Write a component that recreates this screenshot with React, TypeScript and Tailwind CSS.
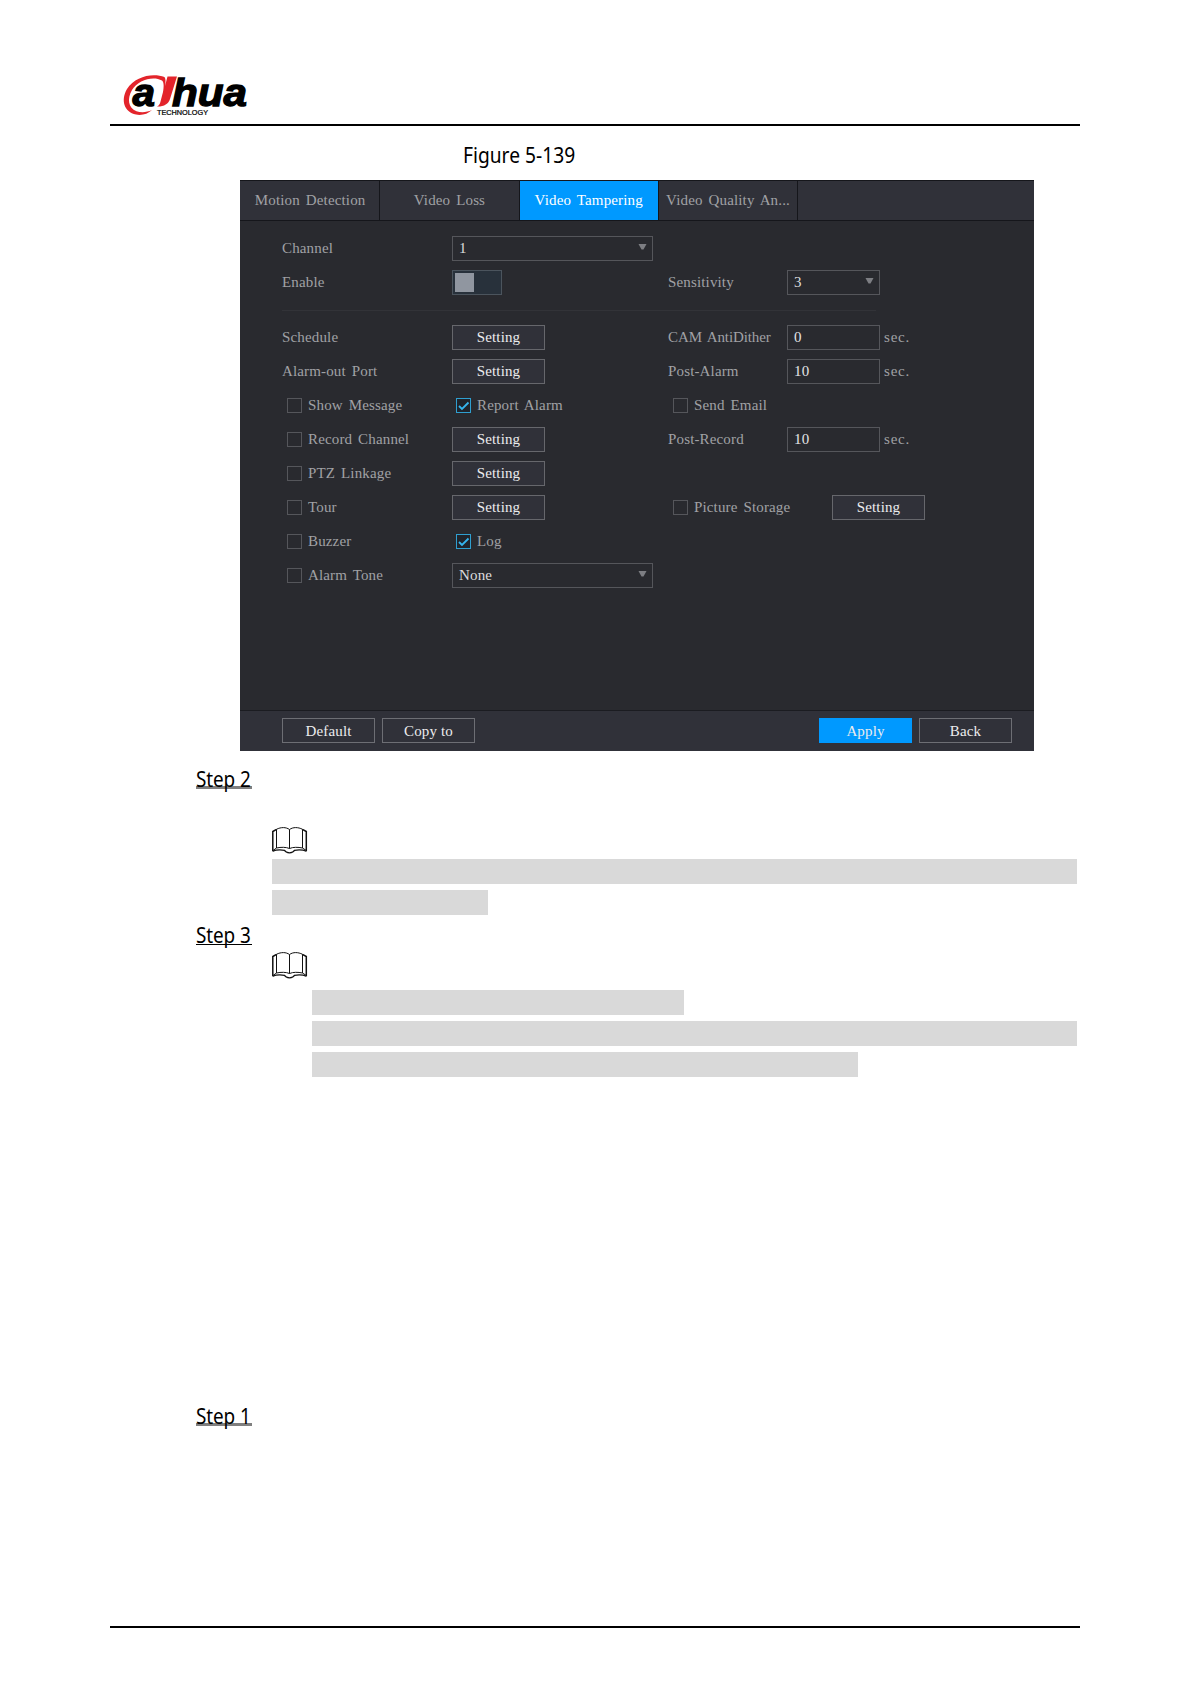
import type { ReactNode } from "react"
import { clsx } from "clsx"

const tabs = [
  { label: "Motion Detection", active: false },
  { label: "Video Loss", active: false },
  { label: "Video Tampering", active: true },
  { label: "Video Quality An...", active: false },
]

function Logo() {
  return (
    <svg width="130" height="46" viewBox="0 0 130 46" overflow="visible" className="block">
      <path
        d="M42.500 4C31 -0.500 13 3 5 16C-1.500 27 2 39 14 41.600C20 42.600 26 41 30 37C25 39.400 19 39.800 14.500 38.200C6 35 5 25.500 10 17C16 7 31 2.500 40 7.500C42 9 42 14 41 19L38.500 28.500C38 31 37 32.500 35 33.600C42 33.800 46.500 31 48 26L55 3.500H45.500L43 13C43.500 9 44 6 42.500 4Z"
        fill="#e3242b"
      />
      <text x="10.500" y="32.500" textLength="22.500" lengthAdjust="spacingAndGlyphs" className="font-['Liberation_Sans'] text-[38px] font-bold italic" stroke="#000" strokeWidth="1.300">a</text>
      <text x="50" y="32.500" textLength="75" lengthAdjust="spacingAndGlyphs" className="font-['Liberation_Sans'] text-[38px] font-bold italic" stroke="#000" strokeWidth="1.300">hua</text>
      <text x="35" y="42" textLength="51" lengthAdjust="spacingAndGlyphs" className="font-['Liberation_Sans'] text-[6.5px]" stroke="#000" strokeWidth="0.2">TECHNOLOGY</text>
    </svg>
  )
}

function BookIcon() {
  return (
    <svg width="36" height="27" viewBox="0 0 36 27" fill="none" stroke="#111" strokeWidth="1" className="block">
      <path d="M4.500 2.300C9 0 14 0 17.500 2.500C21 0 26 0 30.500 2.300V21C26 20 21 20 17.500 21.500C14 20 9 20 4.500 21Z" />
      <path d="M17.500 2.500V21.500" />
      <path d="M4.500 2.300L0.800 4.500V24.300M30.500 2.300L34.300 4.500V24.300" strokeWidth="1.500" />
      <path d="M0.800 24.300C5 22.300 9 22.800 12.500 23.300C14 26.600 21 26.600 22.500 23.300C26 22.800 30 22.300 34.300 24.300" strokeWidth="1.200" />
      <path d="M1 23.500L4.500 21M34.300 23.500L30.500 21" />
    </svg>
  )
}

function Button({ children, variant = "filled" }: { children: ReactNode; variant?: "filled" | "outline" | "primary" }) {
  return (
    <button
      className={clsx(
        "block h-[25px] w-[93px] shrink-0 border text-center leading-[22px] text-[#ececee]",
        variant === "filled" && "border-[#66676c] bg-[#303139]",
        variant === "outline" && "border-[#6d6e74]",
        variant === "primary" && "border-[#0099ff] bg-[#0099ff]"
      )}
    >
      {children}
    </button>
  )
}

function Select({ value, className }: { value: string; className: string }) {
  return (
    <div className={clsx("flex h-[25px] items-center justify-between border border-[#55565b] pr-[5px] pl-1.5 text-[#dcdcde]", className)}>
      <span>{value}</span>
      <svg width="9" height="6" viewBox="0 0 9 6" className="mb-0.5">
        <path d="M0.500 0H8.500L5.500 5.500H3.500Z" fill="#7d7e83" />
      </svg>
    </div>
  )
}

function NumberField({ value }: { value: string }) {
  return (
    <>
      <div className="h-[25px] w-[93px] border border-[#55565b] pl-1.5 leading-[22px] text-[#e4e4e6]">{value}</div>
      <span className="ml-1 tracking-[0.8px]">sec.</span>
    </>
  )
}

function Checkbox({ label, checked = false }: { label: string; checked?: boolean }) {
  return (
    <label className={clsx("flex items-center gap-1.5", checked ? "pl-1" : "pl-[5px]")}>
      <span className={clsx("block size-[15px] shrink-0 border", checked ? "border-[#2f9fd0] bg-[#20242b]" : "border-[#55565b]")}>
        {checked && (
          <svg width="13" height="13" viewBox="0 0 13 13" fill="none" stroke="#35b5ee" strokeWidth="1.800">
            <path d="M2 7L5 10L11.500 3.500" />
          </svg>
        )}
      </span>
      <span>{label}</span>
    </label>
  )
}

function Row({ left, middle, right, field }: { left: ReactNode; middle?: ReactNode; right?: ReactNode; field?: ReactNode }) {
  return (
    <div className="grid h-[34px] grid-cols-[170px_216px_119px_1fr] items-center whitespace-nowrap">
      <div>{left}</div>
      <div>{middle}</div>
      <div>{right}</div>
      <div className="flex items-center">{field}</div>
    </div>
  )
}

function Step({ number, underline }: { number: number; underline: string }) {
  return (
    <div className={clsx("ml-[196px] w-14 whitespace-nowrap", underline)}>
      <span className="block w-[62px] origin-left scale-x-[0.9] font-['Noto_Sans'] text-[21px] leading-[22px] tracking-[-0.1px] text-black">
        Step {number}
      </span>
    </div>
  )
}

function SettingsPanel() {
  return (
    <div className="ml-[240px] flex h-[571px] w-[794px] flex-col bg-[#292a2f] font-['Liberation_Serif'] text-[15px] leading-5 tracking-[0.15px] text-[#a0a1a5] [word-spacing:2px]">
      <div className="flex h-[41px] border-y border-[#15161b] bg-[#303139] pl-px">
        {tabs.map((tab) => (
          <div
            key={tab.label}
            className={clsx(
              "w-[139.3px] border-r border-[#15161b] text-center leading-[39px] whitespace-nowrap",
              tab.active && "bg-[#0099ff] text-white"
            )}
          >
            {tab.label}
          </div>
        ))}
      </div>

      <div className="flex-1 pt-2.5 pl-[42px]">
        <Row left="Channel" middle={<Select value="1" className="w-[201px]" />} />
        <Row
          left="Enable"
          middle={
            <div className="h-[25px] w-[50px] border border-[#4b545d] bg-[#28313b] p-0.5">
              <div className="h-[19px] w-[19px] bg-[#9096a0]" />
            </div>
          }
          right="Sensitivity"
          field={<Select value="3" className="w-[93px]" />}
        />
        <div className="mt-[11px] mb-[9px] h-px w-[594px] bg-[#323338]" />
        <Row
          left="Schedule"
          middle={<Button>Setting</Button>}
          right={<span className="tracking-[-0.1px]">CAM AntiDither</span>}
          field={<NumberField value="0" />}
        />
        <Row left="Alarm-out Port" middle={<Button>Setting</Button>} right="Post-Alarm" field={<NumberField value="10" />} />
        <Row left={<Checkbox label="Show Message" />} middle={<Checkbox label="Report Alarm" checked />} right={<Checkbox label="Send Email" />} />
        <Row left={<Checkbox label="Record Channel" />} middle={<Button>Setting</Button>} right="Post-Record" field={<NumberField value="10" />} />
        <Row left={<Checkbox label="PTZ Linkage" />} middle={<Button>Setting</Button>} />
        <Row
          left={<Checkbox label="Tour" />}
          middle={<Button>Setting</Button>}
          right={<Checkbox label="Picture Storage" />}
          field={<div className="ml-[45px]"><Button>Setting</Button></div>}
        />
        <Row left={<Checkbox label="Buzzer" />} middle={<Checkbox label="Log" checked />} />
        <Row left={<Checkbox label="Alarm Tone" />} middle={<Select value="None" className="w-[201px]" />} />
      </div>

      <div className="flex h-[41px] items-start gap-[7px] border-t border-[#1b1c21] bg-[#303139] pt-[7px] pr-[22px] pl-[42px]">
        <Button variant="outline">Default</Button>
        <Button variant="outline">Copy to</Button>
        <div className="flex-1" />
        <Button variant="primary">Apply</Button>
        <Button variant="outline">Back</Button>
      </div>
    </div>
  )
}

export default function App() {
  return (
    <div className="flex h-[1684px] w-[1191px] flex-col bg-white">
      <header className="ml-[110px] mt-[73px] h-[53px] w-[970px] border-b-2 border-black pl-3">
        <Logo />
      </header>

      <main className="flex flex-1 flex-col">
        <div className="mt-[14px] ml-[463px] h-10 w-[125px] whitespace-nowrap">
          <span className="block origin-left scale-x-[0.915] font-['Noto_Sans'] text-[21px] leading-[30px] text-black">Figure 5-139</span>
        </div>

        <SettingsPanel />

        <div className="mt-[17px]">
          <Step number={2} underline="h-[21px] border-b-[3px] border-[#7f7f7f]" />
        </div>
        <div className="mt-[38px] ml-[272px]">
          <BookIcon />
        </div>
        <div className="mt-[5px] ml-[272px] flex flex-col gap-1.5">
          <div className="h-[25px] w-[805px] bg-[#d9d9d9]" />
          <div className="h-[25px] w-[216px] bg-[#d9d9d9]" />
        </div>

        <div className="mt-[9px]">
          <Step number={3} underline="h-[21px] border-b border-black" />
        </div>
        <div className="mt-[7px] ml-[272px]">
          <BookIcon />
        </div>
        <div className="mt-[11px] ml-[312px] flex flex-col gap-1.5">
          <div className="h-[25px] w-[372px] bg-[#d9d9d9]" />
          <div className="h-[25px] w-[765px] bg-[#d9d9d9]" />
          <div className="h-[25px] w-[546px] bg-[#d9d9d9]" />
        </div>

        <div className="mt-[328px]">
          <Step number={1} underline="h-[21px] border-b-[3px] border-[#7f7f7f]" />
        </div>
      </main>

      <footer className="mb-14 ml-[110px] h-0.5 w-[970px] bg-black" />
    </div>
  )
}
